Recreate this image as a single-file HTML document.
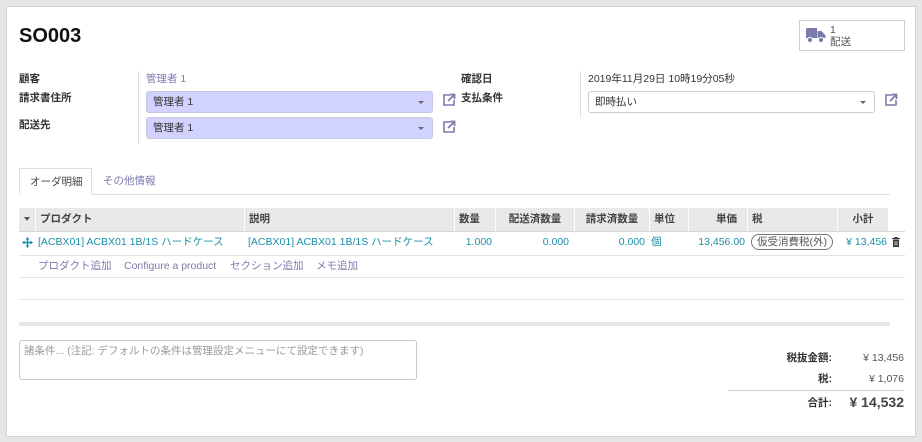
<!DOCTYPE html>
<html><head><meta charset="utf-8"><style>
*{margin:0;padding:0;box-sizing:border-box}
body{width:922px;height:442px;background:#e6e6e6;font-family:"Liberation Sans","Noto Sans CJK JP",sans-serif;font-size:10.5px;line-height:12px;color:#4c4c4c;position:relative;overflow:hidden}
.sheet{position:absolute;left:6px;top:6px;width:910px;height:431px;background:#fff;border:1px solid #d4d4d4}
.a{position:absolute;white-space:nowrap}
.lbl{font-weight:bold;color:#333}
.sel{position:absolute;height:22px;background:#d2d2ff;border:1px solid #c7c7e0;border-radius:3px;padding:4px 6px;color:#333}
.sel:after{content:"";position:absolute;right:8px;top:9px;border:3px solid transparent;border-top:3px solid #666}
.ext{position:absolute;width:14px;height:14px}
.th{position:absolute;top:208px;height:23px;background:#e9e9e9;font-weight:bold;color:#444;padding:5px 4px;border-right:1px solid #fff}
.td{position:absolute;top:236px;color:#1a8fa8}
.hl{position:absolute;left:19px;width:886px;height:1px;background:#e2e2e2}
</style></head><body>
<div class="sheet"></div>
<div class="a" style="left:19px;top:25px;font-size:20px;line-height:22px;font-weight:bold;color:#111">SO003</div>
<div class="a" style="left:799px;top:20px;width:106px;height:31px;border:1px solid #cfcfcf"></div>
<svg class="a" style="left:805px;top:27px" width="22" height="17" viewBox="0 0 22 17"><path d="M1 2.5Q1 1 2.5 1H12v10H1z M12.5 4h4l4 4.5V11h-8z" fill="#7b7bab"/><circle cx="5" cy="13" r="2.6" fill="#7b7bab" stroke="#fff" stroke-width="1"/><circle cx="16" cy="13" r="2.6" fill="#7b7bab" stroke="#fff" stroke-width="1"/></svg>
<div class="a" style="left:830px;top:24px;line-height:12px;color:#555">1<br>配送</div>
<div class="a lbl" style="left:19px;top:73px">顧客</div>
<div class="a lbl" style="left:19px;top:92px">請求書住所</div>
<div class="a lbl" style="left:19px;top:119px">配送先</div>
<div class="a" style="left:138px;top:71px;width:1px;height:73px;background:#ddd"></div>
<div class="a" style="left:146px;top:73px;color:#7c7bad">管理者 1</div>
<div class="sel" style="left:146px;top:91px;width:287px">管理者 1</div>
<div class="sel" style="left:146px;top:117px;width:287px">管理者 1</div>
<svg class="ext" style="left:442px;top:93px" viewBox="0 0 14 14"><path d="M8 2H2v10h10V7" fill="none" stroke="#7c7bad" stroke-width="1.6"/><path d="M6 8l6-6M8 1.5h4.5V6" fill="none" stroke="#7c7bad" stroke-width="1.8"/></svg>
<svg class="ext" style="left:442px;top:120px" viewBox="0 0 14 14"><path d="M8 2H2v10h10V7" fill="none" stroke="#7c7bad" stroke-width="1.6"/><path d="M6 8l6-6M8 1.5h4.5V6" fill="none" stroke="#7c7bad" stroke-width="1.8"/></svg>
<div class="a lbl" style="left:461px;top:73px">確認日</div>
<div class="a lbl" style="left:461px;top:92px">支払条件</div>
<div class="a" style="left:580px;top:71px;width:1px;height:46px;background:#ddd"></div>
<div class="a" style="left:588px;top:73px;color:#333">2019年11月29日 10時19分05秒</div>
<div class="sel" style="left:588px;top:91px;width:287px;background:#fff;border-color:#ccc">即時払い</div>
<svg class="ext" style="left:884px;top:93px" viewBox="0 0 14 14"><path d="M8 2H2v10h10V7" fill="none" stroke="#7c7bad" stroke-width="1.6"/><path d="M6 8l6-6M8 1.5h4.5V6" fill="none" stroke="#7c7bad" stroke-width="1.8"/></svg>
<div class="a" style="left:19px;top:194px;width:871px;height:1px;background:#ddd"></div>
<div class="a" style="left:19px;top:168px;width:73px;height:27px;border:1px solid #ddd;border-bottom:1px solid #fff;background:#fff;padding:7px 10px;color:#444">オーダ明細</div>
<div class="a" style="left:103px;top:175px;color:#7c7bad">その他情報</div>
<div class="th" style="left:19px;width:17px;padding:5px 5px"><span style="display:inline-block;border:3px solid transparent;border-top:4px solid #555;margin-top:4px"></span></div>
<div class="th" style="left:36px;width:209px">プロダクト</div>
<div class="th" style="left:245px;width:210px">説明</div>
<div class="th" style="left:455px;width:41px">数量</div>
<div class="th" style="left:496px;width:79px;text-align:center">配送済数量</div>
<div class="th" style="left:575px;width:75px;text-align:center">請求済数量</div>
<div class="th" style="left:650px;width:39px">単位</div>
<div class="th" style="left:689px;width:59px;text-align:right;padding-right:10px">単価</div>
<div class="th" style="left:748px;width:90px">税</div>
<div class="th" style="left:838px;width:51px;text-align:center">小計</div>
<div class="hl" style="top:231px;background:#d8d8d8"></div>
<svg class="a" style="left:22px;top:237px" width="11" height="11" viewBox="0 0 11 11"><path d="M5.5 0L7.5 2.5H6.2V4.8H8.5V3.5L11 5.5 8.5 7.5V6.2H6.2V8.5H7.5L5.5 11 3.5 8.5H4.8V6.2H2.5V7.5L0 5.5 2.5 3.5V4.8H4.8V2.5H3.5z" fill="#1a8fa8"/></svg>
<div class="td" style="left:38px">[ACBX01] ACBX01 1B/1S ハードケース</div>
<div class="td" style="left:248px">[ACBX01] ACBX01 1B/1S ハードケース</div>
<div class="td" style="left:455px;width:37px;text-align:right">1.000</div>
<div class="td" style="left:496px;width:73px;text-align:right">0.000</div>
<div class="td" style="left:575px;width:70px;text-align:right">0.000</div>
<div class="td" style="left:651px">個</div>
<div class="td" style="left:689px;width:56px;text-align:right">13,456.00</div>
<div class="a" style="left:751px;top:234px;height:16px;border:1px solid #777;border-radius:8px;padding:1px 5px;color:#555">仮受消費税(外)</div>
<div class="td" style="left:838px;width:49px;text-align:right">¥ 13,456</div>
<svg class="a" style="left:892px;top:237px" width="8" height="10" viewBox="0 0 8 10"><path d="M0 1h8v1H0zM2.5 0h3v1h-3zM1 2.5h6V10H1z" fill="#333"/><path d="M3 4v4.5M5 4v4.5" stroke="#fff" stroke-width=".8"/></svg>
<div class="hl" style="top:255px"></div>
<div class="a" style="left:38px;top:260px;color:#7c7bad">プロダクト追加</div>
<div class="a" style="left:124px;top:260px;color:#7c7bad">Configure a product</div>
<div class="a" style="left:230px;top:260px;color:#7c7bad">セクション追加</div>
<div class="a" style="left:316px;top:260px;color:#7c7bad">メモ追加</div>
<div class="hl" style="top:277px"></div>
<div class="hl" style="top:299px"></div>
<div class="a" style="left:19px;top:322px;width:871px;height:4px;background:#e6e6e6"></div>
<div class="a" style="left:19px;top:340px;width:398px;height:40px;border:1px solid #c8c8c8;border-radius:3px;padding:4px 4px;color:#999">諸条件... (注記: デフォルトの条件は管理設定メニューにて設定できます)</div>
<div class="a lbl" style="left:780px;top:352px;width:52px;text-align:right">税抜金額:</div>
<div class="a" style="left:840px;top:352px;width:64px;text-align:right;color:#555">¥ 13,456</div>
<div class="a lbl" style="left:780px;top:373px;width:52px;text-align:right">税:</div>
<div class="a" style="left:840px;top:373px;width:64px;text-align:right;color:#555">¥ 1,076</div>
<div class="a" style="left:728px;top:390px;width:176px;height:1px;background:#ccc"></div>
<div class="a lbl" style="left:780px;top:397px;width:52px;text-align:right">合計:</div>
<div class="a" style="left:830px;top:394px;width:74px;text-align:right;font-size:14px;line-height:16px;font-weight:bold;color:#444">¥ 14,532</div>
</body></html>
